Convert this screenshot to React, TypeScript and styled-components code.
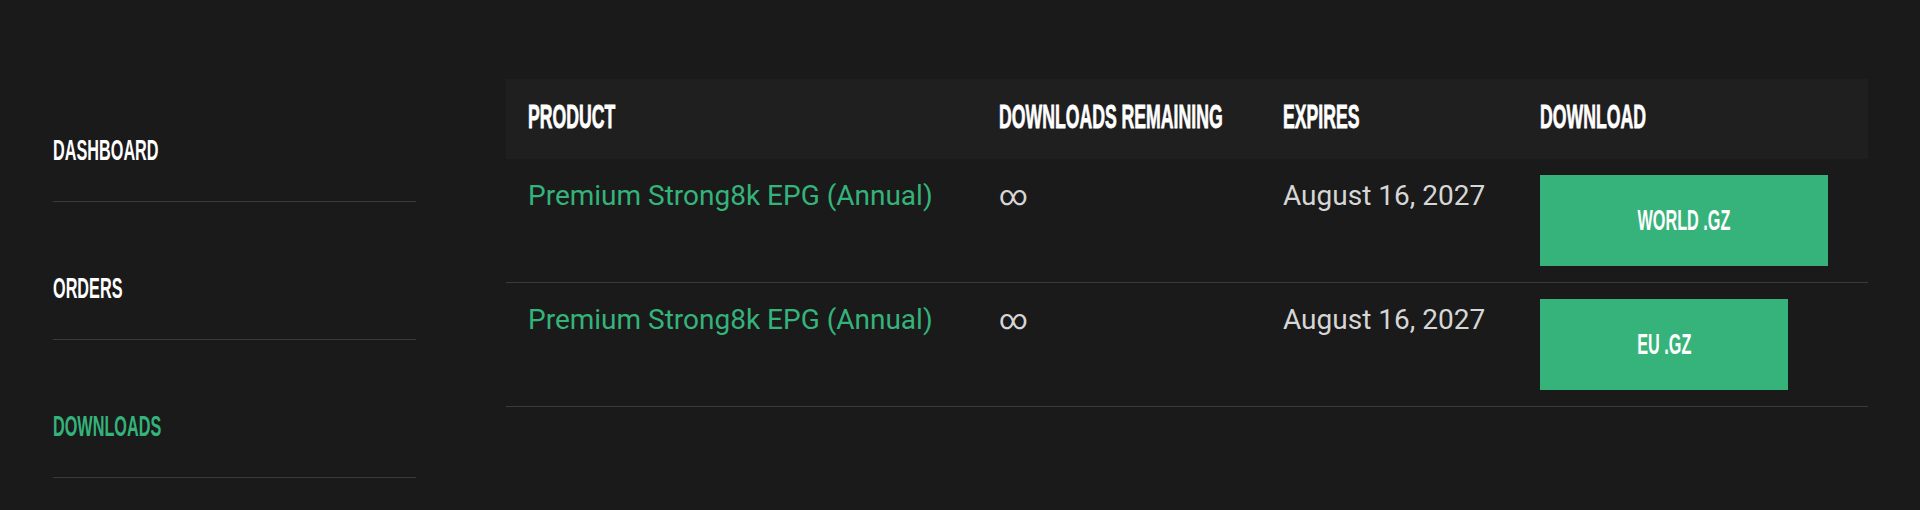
import styled, { createGlobalStyle } from "styled-components"

const GlobalStyle = createGlobalStyle`
    body {
        margin: 0;
        background-color: #1a1a1a;
        font-family: Roboto, "Liberation Sans", sans-serif;
    }
`

const menu = [
    { label: "DASHBOARD", active: false },
    { label: "ORDERS", active: false },
    { label: "DOWNLOADS", active: true },
]

const downloads = [
    { product: "Premium Strong8k EPG (Annual)", remaining: "∞", expires: "August 16, 2027", file: "WORLD .GZ", width: 288 },
    { product: "Premium Strong8k EPG (Annual)", remaining: "∞", expires: "August 16, 2027", file: "EU .GZ", width: 248 },
]

export default function App() {
    return (
        <>
            <GlobalStyle />
            <Page>
                <Sidebar>
                    {menu.map(item => (
                        <MenuItem key={item.label} $active={item.active}>
                            <Squeeze>{item.label}</Squeeze>
                        </MenuItem>
                    ))}
                </Sidebar>

                <Table>
                    <HeadRow>
                        <HeadCell><Squeeze>PRODUCT</Squeeze></HeadCell>
                        <HeadCell><Squeeze>DOWNLOADS REMAINING</Squeeze></HeadCell>
                        <HeadCell><Squeeze>EXPIRES</Squeeze></HeadCell>
                        <HeadCell><Squeeze>DOWNLOAD</Squeeze></HeadCell>
                    </HeadRow>
                    {downloads.map(row => (
                        <Row key={row.file}>
                            <Cell><ProductLink href="#">{row.product}</ProductLink></Cell>
                            <Cell>{row.remaining}</Cell>
                            <Cell>{row.expires}</Cell>
                            <ButtonCell>
                                <DownloadButton href="#" $width={row.width}>
                                    <Squeeze>{row.file}</Squeeze>
                                </DownloadButton>
                            </ButtonCell>
                        </Row>
                    ))}
                </Table>
            </Page>
        </>
    )
}

const Page = styled.div`
    display: flex;
    align-items: flex-start;
    gap: 90px;
    padding: 64px 52px 0 53px;
    height: 510px;
    box-sizing: border-box;
    overflow: hidden;
`

const Sidebar = styled.nav`
    width: 363px;
    flex-shrink: 0;
    display: flex;
    flex-direction: column;
`

const MenuItem = styled.a<{ $active: boolean }>`
    display: block;
    padding: 72px 0 36px;
    border-bottom: 1px solid #3a3a3a;
    font-family: "Liberation Sans", Arial, sans-serif;
    font-weight: 700;
    font-size: 29px;
    line-height: 29px;
    color: ${p => (p.$active ? "#34b37b" : "#ffffff")};
    cursor: pointer;
`

const Squeeze = styled.span`
    display: inline-block;
    transform: scaleX(0.56);
    transform-origin: left center;
    white-space: nowrap;
`

const Table = styled.div`
    flex: 1;
    margin-top: 15px;
    display: flex;
    flex-direction: column;
`

const HeadRow = styled.div`
    display: grid;
    grid-template-columns: 471px 284px 257px 1fr;
    background-color: #1f1f1f;
    height: 80px;
`

const HeadCell = styled.div`
    padding: 21px 22px 26px;
    font-family: "Liberation Sans", Arial, sans-serif;
    font-weight: 700;
    font-size: 33px;
    line-height: 33px;
    color: #ffffff;
    -webkit-text-stroke: 0.8px #ffffff;

    span {
        transform: scaleX(0.535);
    }
`

const Row = styled.div`
    display: grid;
    grid-template-columns: 471px 284px 257px 1fr;
    border-bottom: 1px solid #3a3a3a;
`

const Cell = styled.div`
    padding: 16px 22px;
    font-size: 28px;
    line-height: 42px;
    color: #d6d6d6;
    white-space: nowrap;
`

const ProductLink = styled.a`
    color: #34b37b;
    text-decoration: none;
`

const ButtonCell = styled.div`
    padding: 16px 22px;
`

const DownloadButton = styled.a<{ $width: number }>`
    display: flex;
    align-items: center;
    justify-content: center;
    width: ${p => p.$width}px;
    height: 91px;
    background-color: #36b37a;
    color: #ffffff;
    text-decoration: none;
    font-family: "Liberation Sans", Arial, sans-serif;
    font-weight: 700;
    font-size: 29px;
    line-height: 29px;

    span {
        transform-origin: center;
    }
`
